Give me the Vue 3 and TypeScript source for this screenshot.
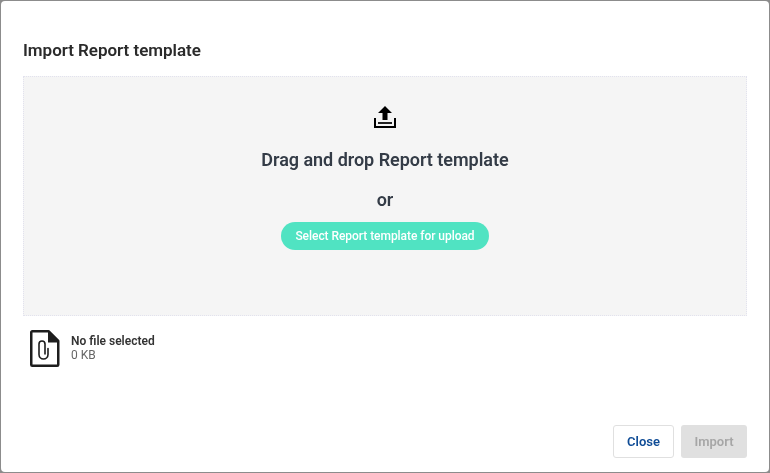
<script setup lang="ts">
const fileName: string = 'No file selected'
const fileSize: string = '0 KB'
</script>

<template>
  <div class="backdrop">
    <div class="modal">
      <h1 class="title">Import Report template</h1>
      <div class="drop">
        <svg class="upload" width="24" height="24" viewBox="0 0 24 24" aria-hidden="true">
          <path fill="#000" d="M12 1 5 8h4.500v7h5V8H19z" />
          <path fill="#000" d="M1 13h2v8h18v-8h2v10H1z" />
          <rect x="5" y="17" width="14" height="2" fill="#222" />
        </svg>
        <div class="drag">Drag and drop Report template</div>
        <div class="or">or</div>
        <button class="select" type="button">Select Report template for upload</button>
      </div>
      <div class="file">
        <svg class="doc" width="30" height="38" viewBox="0 0 30 38" aria-hidden="true">
          <path fill="none" stroke="#1d1d1d" stroke-width="2.500" stroke-linejoin="round" d="M1.250 2.250a1 1 0 0 1 1-1H18.500l9.750 9.750V34.750a1 1 0 0 1-1 1H2.250a1 1 0 0 1-1-1z" />
          <path fill="#1d1d1d" d="M18 1h1l10 10v1.500H18z" />
          <path fill="none" stroke="#1d1d1d" stroke-width="1.600" stroke-linecap="round" d="M18 18.500v6a4.500 4.500 0 0 1-9 0V14a3 3 0 0 1 6 0V24" />
        </svg>
        <div class="meta">
          <div class="name">{{ fileName }}</div>
          <div class="size">{{ fileSize }}</div>
        </div>
      </div>
      <div class="footer">
        <button class="btn close" type="button">Close</button>
        <button class="btn import" type="button" disabled>Import</button>
      </div>
    </div>
  </div>
</template>

<style>
html, body { margin: 0; background: #8c8c8c; }
</style>

<style scoped>
.backdrop {
  width: 770px;
  height: 473px;
  box-sizing: border-box;
  padding: 1px;
  background: #8c8c8c;
  font-family: Roboto, "Liberation Sans", sans-serif;
}
.modal {
  height: 100%;
  box-sizing: border-box;
  background: #fff;
  border-radius: 4px;
  padding: 39px 22px 14px 22px;
  display: flex;
  flex-direction: column;
  will-change: transform;
}
.title {
  margin: 0 0 16px;
  font-size: 17px;
  line-height: 20px;
  font-weight: 600;
  letter-spacing: -0.03px;
  color: #2b2b2b;
}
.drop {
  height: 240px;
  box-sizing: border-box;
  background: #f5f5f5;
  border: 1px dotted #e2e2ee;
  display: flex;
  flex-direction: column;
  align-items: center;
  padding-top: 28px;
}
.upload { display: block; }
.drag {
  margin-top: 19px;
  font-size: 18px;
  line-height: 24px;
  font-weight: 600;
  letter-spacing: -0.03px;
  color: #343c47;
}
.or {
  margin-top: 16px;
  font-size: 18px;
  line-height: 24px;
  font-weight: 600;
  color: #343c47;
}
.select {
  margin-top: 10px;
  width: 208px;
  height: 28px;
  padding: 0;
  border: 0;
  border-radius: 14px;
  background: #50e3c2;
  color: #fff;
  font-family: inherit;
  font-size: 12px;
  font-weight: 500;
  letter-spacing: -0.05px;
}
.file {
  margin-top: 14px;
  padding-left: 7px;
  display: flex;
  align-items: center;
  gap: 11px;
}
.doc { display: block; }
.meta { font-size: 12px; line-height: 14px; margin-top: -2px; }
.name { font-weight: 600; color: #333; }
.size { color: #666; }
.footer {
  margin-top: auto;
  display: flex;
  justify-content: flex-end;
  gap: 7px;
}
.btn {
  height: 33px;
  padding: 0;
  border-radius: 3px;
  font-family: inherit;
  font-size: 13px;
  font-weight: 600;
}
.close {
  width: 61px;
  background: #fff;
  border: 1px solid #e0e0e0;
  color: #0f4c96;
}
.import {
  width: 66px;
  background: #e0e0e0;
  border: 0;
  color: #a6a6a6;
}
</style>
